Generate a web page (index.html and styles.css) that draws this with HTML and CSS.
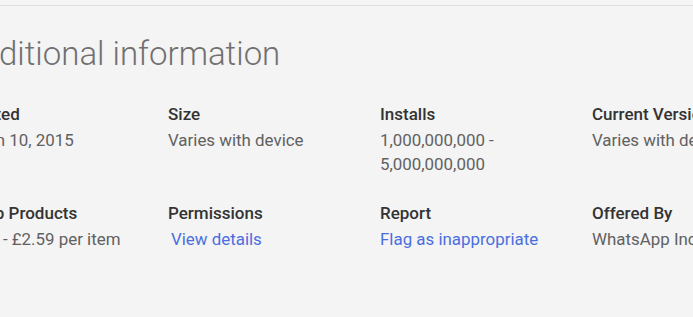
FILE: index.html
```html
<!DOCTYPE html>
<html lang="en">
<head>
  <meta charset="UTF-8" />
  <title>Additional information</title>
  <link rel="stylesheet" href="styles.css">
</head>
<body>

  <div class="top-strip"></div>

  <section class="details">
    <h1 class="details-title">Additional information</h1>

    <div class="meta-grid">
      <div class="meta-item">
        <div class="meta-label">Updated</div>
        <div class="meta-value date">Jun 10, 2015</div>
      </div>
      <div class="meta-item">
        <div class="meta-label">Size</div>
        <div class="meta-value">Varies with device</div>
      </div>
      <div class="meta-item">
        <div class="meta-label">Installs</div>
        <div class="meta-value">1,000,000,000 -<br>5,000,000,000</div>
      </div>
      <div class="meta-item">
        <div class="meta-label">Current Version</div>
        <div class="meta-value">Varies with device</div>
      </div>

      <div class="meta-item">
        <div class="meta-label">In-app Products</div>
        <div class="meta-value">£0.79 - £2.59 per item</div>
      </div>
      <div class="meta-item">
        <div class="meta-label">Permissions</div>
        <div class="meta-value"><a class="meta-link indent" href="#">View details</a></div>
      </div>
      <div class="meta-item">
        <div class="meta-label">Report</div>
        <div class="meta-value"><a class="meta-link" href="#">Flag as inappropriate</a></div>
      </div>
      <div class="meta-item">
        <div class="meta-label">Offered By</div>
        <div class="meta-value">WhatsApp Inc.</div>
      </div>
    </div>
  </section>

</body>
</html>
```

FILE: styles.css
```css
/* Palette */
:root {
  --page-bg: #f4f4f4;
  --strip-bg: #f5f5f5;
  --rule: #dedede;
  --title: #707070;
  --label: #333333;
  --value: #616161;
  --link: #4a6fdf;
}

* { box-sizing: border-box; margin: 0; padding: 0; }

html, body {
  width: 693px;
  height: 317px;
  overflow: hidden;
}

body {
  font-family: Roboto, Arial, sans-serif;
  background: var(--page-bg);
  color: var(--value);
}

/* Strip above the section */
.top-strip {
  height: 6px;
  background: var(--strip-bg);
  border-bottom: 1px solid var(--rule);
}

/* Section (its left edge is outside the window) */
.details {
  margin-left: -44px;
  padding-top: 26px;
  width: 900px;
}

.details-title {
  font-size: 33px;
  font-weight: 300;
  line-height: 44px;
  color: var(--title);
  margin-left: 4px;
  margin-bottom: 28px;
}

.meta-grid {
  display: grid;
  grid-template-columns: repeat(4, 212px);
  row-gap: 27px;
}

.meta-label {
  font-size: 17px;
  font-weight: 500;
  line-height: 20px;
  margin-bottom: 4px;
  color: var(--label);
  white-space: nowrap;
}

.meta-value {
  font-size: 16.9px;
  line-height: 24px;
  color: var(--value);
  white-space: nowrap;
}

.meta-value.date { padding-left: 21px; }

.meta-link {
  color: var(--link);
  text-decoration: none;
}

.meta-link.indent { margin-left: 3px; }
```
